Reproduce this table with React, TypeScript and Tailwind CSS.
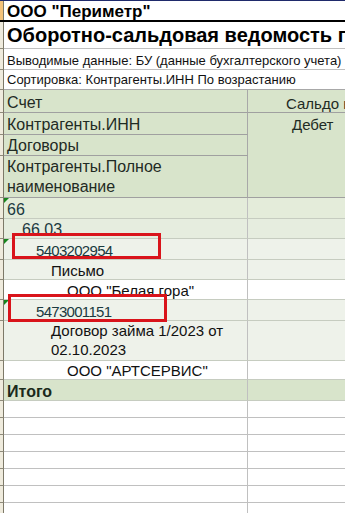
import React from "react";

type DataRow = {
  label: string;
  indent: number;
  h: number;
  bg: string;
  color?: string;
  tri?: boolean;
  bold?: boolean;
  multi?: boolean;
};

const dataRows: DataRow[] = [
  { label: "66", indent: 3, h: 21, bg: "bg-[#e4ecda]", color: "text-[#1b3a3f]", tri: true },
  { label: "66.03", indent: 18, h: 20, bg: "bg-[#e6eddf]", color: "text-[#1b3a3f]" },
  { label: "5403202954", indent: 32, h: 21, bg: "bg-[#eef2ea]", color: "text-[#1b3a3f]", tri: true },
  { label: "Письмо", indent: 47, h: 20, bg: "bg-[#eef2ea]", color: "text-[#111]" },
  { label: 'ООО "Белая гора"', indent: 63, h: 20, bg: "bg-white", color: "text-[#111]" },
  { label: "5473001151", indent: 32, h: 21, bg: "bg-[#eef2ea]", color: "text-[#1b3a3f]", tri: true },
  { label: "Договор займа 1/2023 от 02.10.2023", indent: 47, h: 40, bg: "bg-[#eef2ea]", color: "text-[#111]", multi: true },
  { label: 'ООО "АРТСЕРВИС"', indent: 63, h: 19, bg: "bg-white", color: "text-[#111]" },
  { label: "Итого", indent: 3, h: 21, bg: "bg-[#d8e4cb]", color: "text-[#1a2a1a]", bold: true },
];

const headerRows = [
  { label: "Счет", h: 23 },
  { label: "Контрагенты.ИНН", h: 22 },
  { label: "Договоры", h: 21 },
  { label: "Контрагенты.Полное наименование", h: 42, multi: true },
];

const Strip = ({ orange }: { orange?: boolean }) => (
  <div
    className={`w-[4px] shrink-0 border-r border-b border-r-[#7d7968] border-b-[#8e8a7a] ${
      orange ? "bg-[#f4c27a]" : "bg-[#efebdd]"
    }`}
  />
);

export default function App() {
  return (
    <div
      className="relative w-[345px] h-[513px] overflow-hidden bg-white"
      style={{ fontFamily: '"Liberation Sans", Arial, sans-serif' }}
    >
      {/* row 1 */}
      <div className="flex h-[22px] border-t border-t-[#1f2a6b] border-b-2 border-b-black">
        <div className="w-[4px] shrink-0 bg-[#f4c27a] border-r border-r-[#7d7968]" />
        <div className="flex items-end pl-[3px] text-[17px] leading-[17px] font-bold text-black whitespace-nowrap">
          ООО "Периметр"
        </div>
      </div>

      {/* row 2 title */}
      <div className="flex h-[27px]">
        <Strip />
        <div className="flex-1 flex items-center pl-[3px] border-b border-[#c0c0c0] text-[20px] leading-[22px] font-bold text-black whitespace-nowrap overflow-hidden">
          Оборотно-сальдовая ведомость по счету 66.03
        </div>
      </div>

      {/* row 3 */}
      <div className="flex h-[21px]">
        <Strip />
        <div className="flex-1 flex items-end pl-[3px] pb-[1px] border-b border-[#c0c0c0] text-[13px] leading-[15px] text-[#111] whitespace-nowrap overflow-hidden">
          Выводимые данные: БУ (данные бухгалтерского учета)
        </div>
      </div>

      {/* row 4 */}
      <div className="flex h-[20px]">
        <Strip />
        <div className="flex-1 flex items-end pl-[3px] pb-[2px] border-b border-[#a8a8a8] text-[13px] leading-[15px] text-[#111] whitespace-nowrap overflow-hidden">
          Сортировка: Контрагенты.ИНН По возрастанию
        </div>
      </div>

      {/* header block */}
      <div className="flex">
        <div className="flex flex-col">
          {headerRows.map((r) => (
            <div key={r.label} className="flex" style={{ height: r.h }}>
              <Strip />
              <div
                className={`w-[244px] flex items-end pl-[3px] bg-[#d8e4cb] border-b border-r border-b-[#a0a0a0] border-r-[#a8a8a8] text-[16px] text-[#1f2b24] ${
                  r.multi ? "leading-[20px]" : "leading-[18px] whitespace-nowrap"
                }`}
              >
                {r.multi ? (
                  <span>
                    Контрагенты.Полное
                    <br />
                    наименование
                  </span>
                ) : (
                  r.label
                )}
              </div>
            </div>
          ))}
        </div>
        <div className="flex-1 flex flex-col bg-[#d8e4cb] overflow-hidden">
          <div className="h-[23px] flex items-end pl-[38px] border-b border-[#a0a0a0] text-[15px] leading-[17px] text-[#1f2b24] whitespace-nowrap">
            Сальдо на начало периода
          </div>
          <div className="flex-1 pt-[3px] pl-[44px] border-b border-[#a0a0a0] text-[15px] leading-[17px] text-[#1f2b24]">
            Дебет
          </div>
        </div>
      </div>

      {/* data rows */}
      {dataRows.map((r) => (
        <div key={r.label} className={`flex ${r.bg}`} style={{ height: r.h }}>
          <Strip />
          <div
            className={`relative w-[244px] flex border-b border-r border-b-[#c6ccc0] border-r-[#c0c0c0] ${
              r.bold ? "font-bold text-[16px]" : "text-[15px]"
            } ${r.color} ${
              r.multi ? "items-start leading-[19px]" : "items-end leading-[17px] whitespace-nowrap"
            } ${/^\d{10}$/.test(r.label) ? "tracking-[-0.7px]" : ""} ${
              /^66/.test(r.label) ? "text-[16px]" : ""
            }`}
            style={{ paddingLeft: r.indent }}
          >
            {r.tri && (
              <div className="absolute top-0 left-0 w-0 h-0 border-t-[5px] border-t-[#17851d] border-r-[5px] border-r-transparent" />
            )}
            {r.multi ? <span className="w-[190px]">{r.label}</span> : r.label}
          </div>
          <div className="flex-1 border-b border-[#c6ccc0]" />
        </div>
      ))}

      {/* empty rows */}
      {Array.from({ length: 7 }).map((_, i) => (
        <div key={i} className="flex h-[17px]">
          <Strip />
          <div className="w-[244px] border-b border-r border-b-[#c0c0c0] border-r-[#c0c0c0]" />
          <div className="flex-1 border-b border-[#c0c0c0]" />
        </div>
      ))}

      {/* red highlight boxes */}
      <div className="absolute left-[12px] top-[233px] w-[149px] h-[26px] border-[3px] border-[#d9141b]" />
      <div className="absolute left-[8px] top-[294px] w-[159px] h-[28px] border-[3px] border-[#d9141b]" />
    </div>
  );
}
